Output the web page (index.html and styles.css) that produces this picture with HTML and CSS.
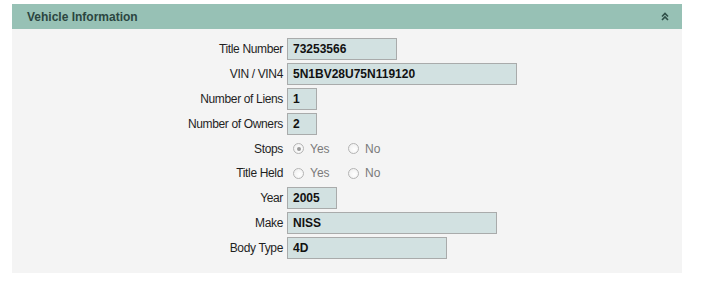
FILE: index.html
```html
<!DOCTYPE html>
<html>
<head>
<meta charset="utf-8">
<link rel="stylesheet" href="styles.css">
</head>
<body>
<div class="panel">
  <div class="panel-header">
    <span class="panel-title">Vehicle Information</span>
    <svg class="collapse" width="8" height="9" viewBox="0 0 8 9">
      <path d="M1 4.5 L4 1.5 L7 4.5 M1 8 L4 5 L7 8" fill="none" stroke="#2f4f48" stroke-width="1.6"/>
    </svg>
  </div>
  <div class="panel-body">
    <div class="form">
      <label class="lbl">Title Number</label>
      <div class="field"><span class="input w110">73253566</span></div>

      <label class="lbl">VIN / VIN4</label>
      <div class="field"><span class="input w230">5N1BV28U75N119120</span></div>

      <label class="lbl">Number of Liens</label>
      <div class="field"><span class="input w30">1</span></div>

      <label class="lbl">Number of Owners</label>
      <div class="field"><span class="input w30">2</span></div>

      <label class="lbl">Stops</label>
      <div class="field radios">
        <span class="opt"><span class="radio checked"></span><span class="opt-text">Yes</span></span>
        <span class="opt"><span class="radio"></span><span class="opt-text">No</span></span>
      </div>

      <label class="lbl">Title Held</label>
      <div class="field radios">
        <span class="opt"><span class="radio"></span><span class="opt-text">Yes</span></span>
        <span class="opt"><span class="radio"></span><span class="opt-text">No</span></span>
      </div>

      <label class="lbl">Year</label>
      <div class="field"><span class="input w50">2005</span></div>

      <label class="lbl">Make</label>
      <div class="field"><span class="input w210">NISS</span></div>

      <label class="lbl">Body Type</label>
      <div class="field"><span class="input w160">4D</span></div>
    </div>
  </div>
</div>
</body>
</html>
```

FILE: styles.css
```css
html, body {
  margin: 0;
  padding: 0;
  background: #ffffff;
}
body {
  padding: 4px 20px 0 12px;
  font-family: "Liberation Sans", Arial, sans-serif;
  font-size: 12px;
  color: #222;
}
.panel {
  width: 670px;
}
.panel-header {
  height: 25px;
  background: #97c1b5;
  display: flex;
  align-items: center;
  justify-content: space-between;
  padding: 0 12px 0 15px;
  box-sizing: border-box;
}
.panel-title {
  font-weight: bold;
  font-size: 12px;
  color: #2b4641;
}
.collapse {
  display: block;
  margin-right: 1px;
}
.panel-body {
  background: #f4f4f4;
  padding: 9px 0 14px 0;
}
.form {
  display: grid;
  grid-template-columns: 271px 1fr;
  grid-template-rows: 22px 22px 22px 22px 21.5px 21.5px 22px 22px 22px;
  column-gap: 4px;
  row-gap: 3px;
}
.lbl {
  display: flex;
  align-items: center;
  justify-content: flex-end;
  color: #1f1f1f;
  font-size: 12px;
  letter-spacing: -0.35px;
}
.field {
  display: flex;
  align-items: center;
}
.input {
  box-sizing: border-box;
  height: 22px;
  background: #d2e1e1;
  border: 1px solid #a9abab;
  font-weight: bold;
  font-size: 12px;
  color: #111;
  padding: 0 0 0 5px;
  display: flex;
  align-items: center;
}
.w30 { width: 30px; }
.w50 { width: 50px; }
.w110 { width: 110px; }
.w160 { width: 160px; }
.w210 { width: 210px; }
.w230 { width: 230px; }
.radios {
  padding-left: 6px;
}
.opt {
  display: flex;
  align-items: center;
  width: 55px;
}
.radio {
  box-sizing: border-box;
  width: 11px;
  height: 11px;
  border-radius: 50%;
  border: 1px solid #b4b4b4;
  background: radial-gradient(circle at 60% 60%, #ffffff 0%, #ececec 100%);
  position: relative;
  margin-right: 6px;
}
.radio.checked::after {
  content: "";
  position: absolute;
  left: 2.5px;
  top: 2.5px;
  width: 4px;
  height: 4px;
  border-radius: 50%;
  background: #9a9a9a;
}
.opt-text {
  color: #7a7a7a;
  font-size: 12px;
}
```
